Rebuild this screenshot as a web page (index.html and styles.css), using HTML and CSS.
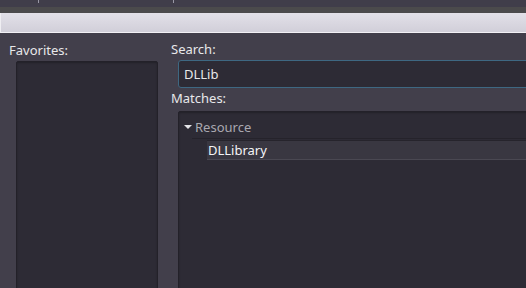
FILE: index.html
```html
<!DOCTYPE html>
<html lang="en">
<head>
  <meta charset="UTF-8">
  <title>Resource Search</title>
  <link rel="stylesheet" href="styles.css">
</head>
<body>
  <div class="top-strip">
    <span class="tick tick-a"></span>
    <span class="tick tick-b"></span>
  </div>
  <div class="gray-band"></div>
  <div class="title-bar"></div>

  <main class="panel">
    <section class="fav-col">
      <label class="label">Favorites:</label>
      <div class="box fav-box"></div>
    </section>
    <section class="search-col">
      <label class="label">Search:</label>
      <div class="search-input">DLLib</div>
      <label class="label matches-label">Matches:</label>
      <div class="box match-box">
        <div class="tree-group">
          <span class="arrow"></span>
          <span class="group-name">Resource</span>
        </div>
        <div class="tree-item">DLLibrary</div>
      </div>
    </section>
  </main>
</body>
</html>
```

FILE: styles.css
```css
:root {
  --body-bg: #423f4b;
  --box-bg: #2d2b35;
  --box-edge: #232129;
  --text: #e8e8ea;
  --muted: #a9a8b0;
  --focus: #3e6882;
  --font: 'Noto Sans', 'DejaVu Sans', sans-serif;
}
* { box-sizing: border-box; margin: 0; padding: 0; }
html, body { height: 100%; overflow: hidden; }
body { display: flex; flex-direction: column; background: var(--body-bg); font-family: var(--font); font-size: 13px; color: var(--text); }

.top-strip { position: relative; height: 7px; background: #403d4a; }
.tick { position: absolute; top: 0; width: 1px; height: 3px; background: #9a98a6; }
.tick-a { left: 38px; }
.tick-b { left: 173px; }
.gray-band { height: 6px; background: #4b4a4c; }
.title-bar { height: 20px; background: linear-gradient(#e2e0e8, #d1cfd9); border-left: 1px solid #efeef2; border-bottom: 1px solid #f2f1f5; }

.panel { flex: 1; display: flex; gap: 13px; padding: 7px 0 0 9px; min-height: 0; }
.label { display: block; height: 18px; line-height: 18px; }

.fav-col { width: 149px; display: flex; flex-direction: column; padding-top: 1px; }
.box { background: var(--box-bg); border: 1px solid var(--box-edge); border-radius: 2px; box-shadow: inset 0 1px 2px rgba(0, 0, 0, 0.25); }
.fav-box { flex: 1; margin: 2px 0 -4px 7px; }

.search-col { flex: 1; display: flex; flex-direction: column; margin-right: -8px; }
.search-input { height: 28px; line-height: 26px; margin: 2px 0 0 7px; padding-left: 5px; background: var(--box-bg); border: 1px solid var(--focus); border-radius: 3px; }
.matches-label { margin-top: 1px; }
.match-box { flex: 1; margin: 4px 0 -4px 7px; padding-top: 3px; }

.tree-group { display: flex; align-items: center; height: 24px; margin-left: 13px; border-bottom: 1px solid #25232b; color: var(--muted); }
.arrow { width: 0; height: 0; margin: 0 3px 0 -8px; border-left: 4px solid transparent; border-right: 4px solid transparent; border-top: 4px solid #e4e4e8; }
.tree-item { height: 20px; line-height: 18px; margin: 1px 0 0 28px; padding-left: 1px; background: #393741; border-top: 1px solid #26242c; border-bottom: 1px solid #4a4852; color: #f4f4f6; }
```
